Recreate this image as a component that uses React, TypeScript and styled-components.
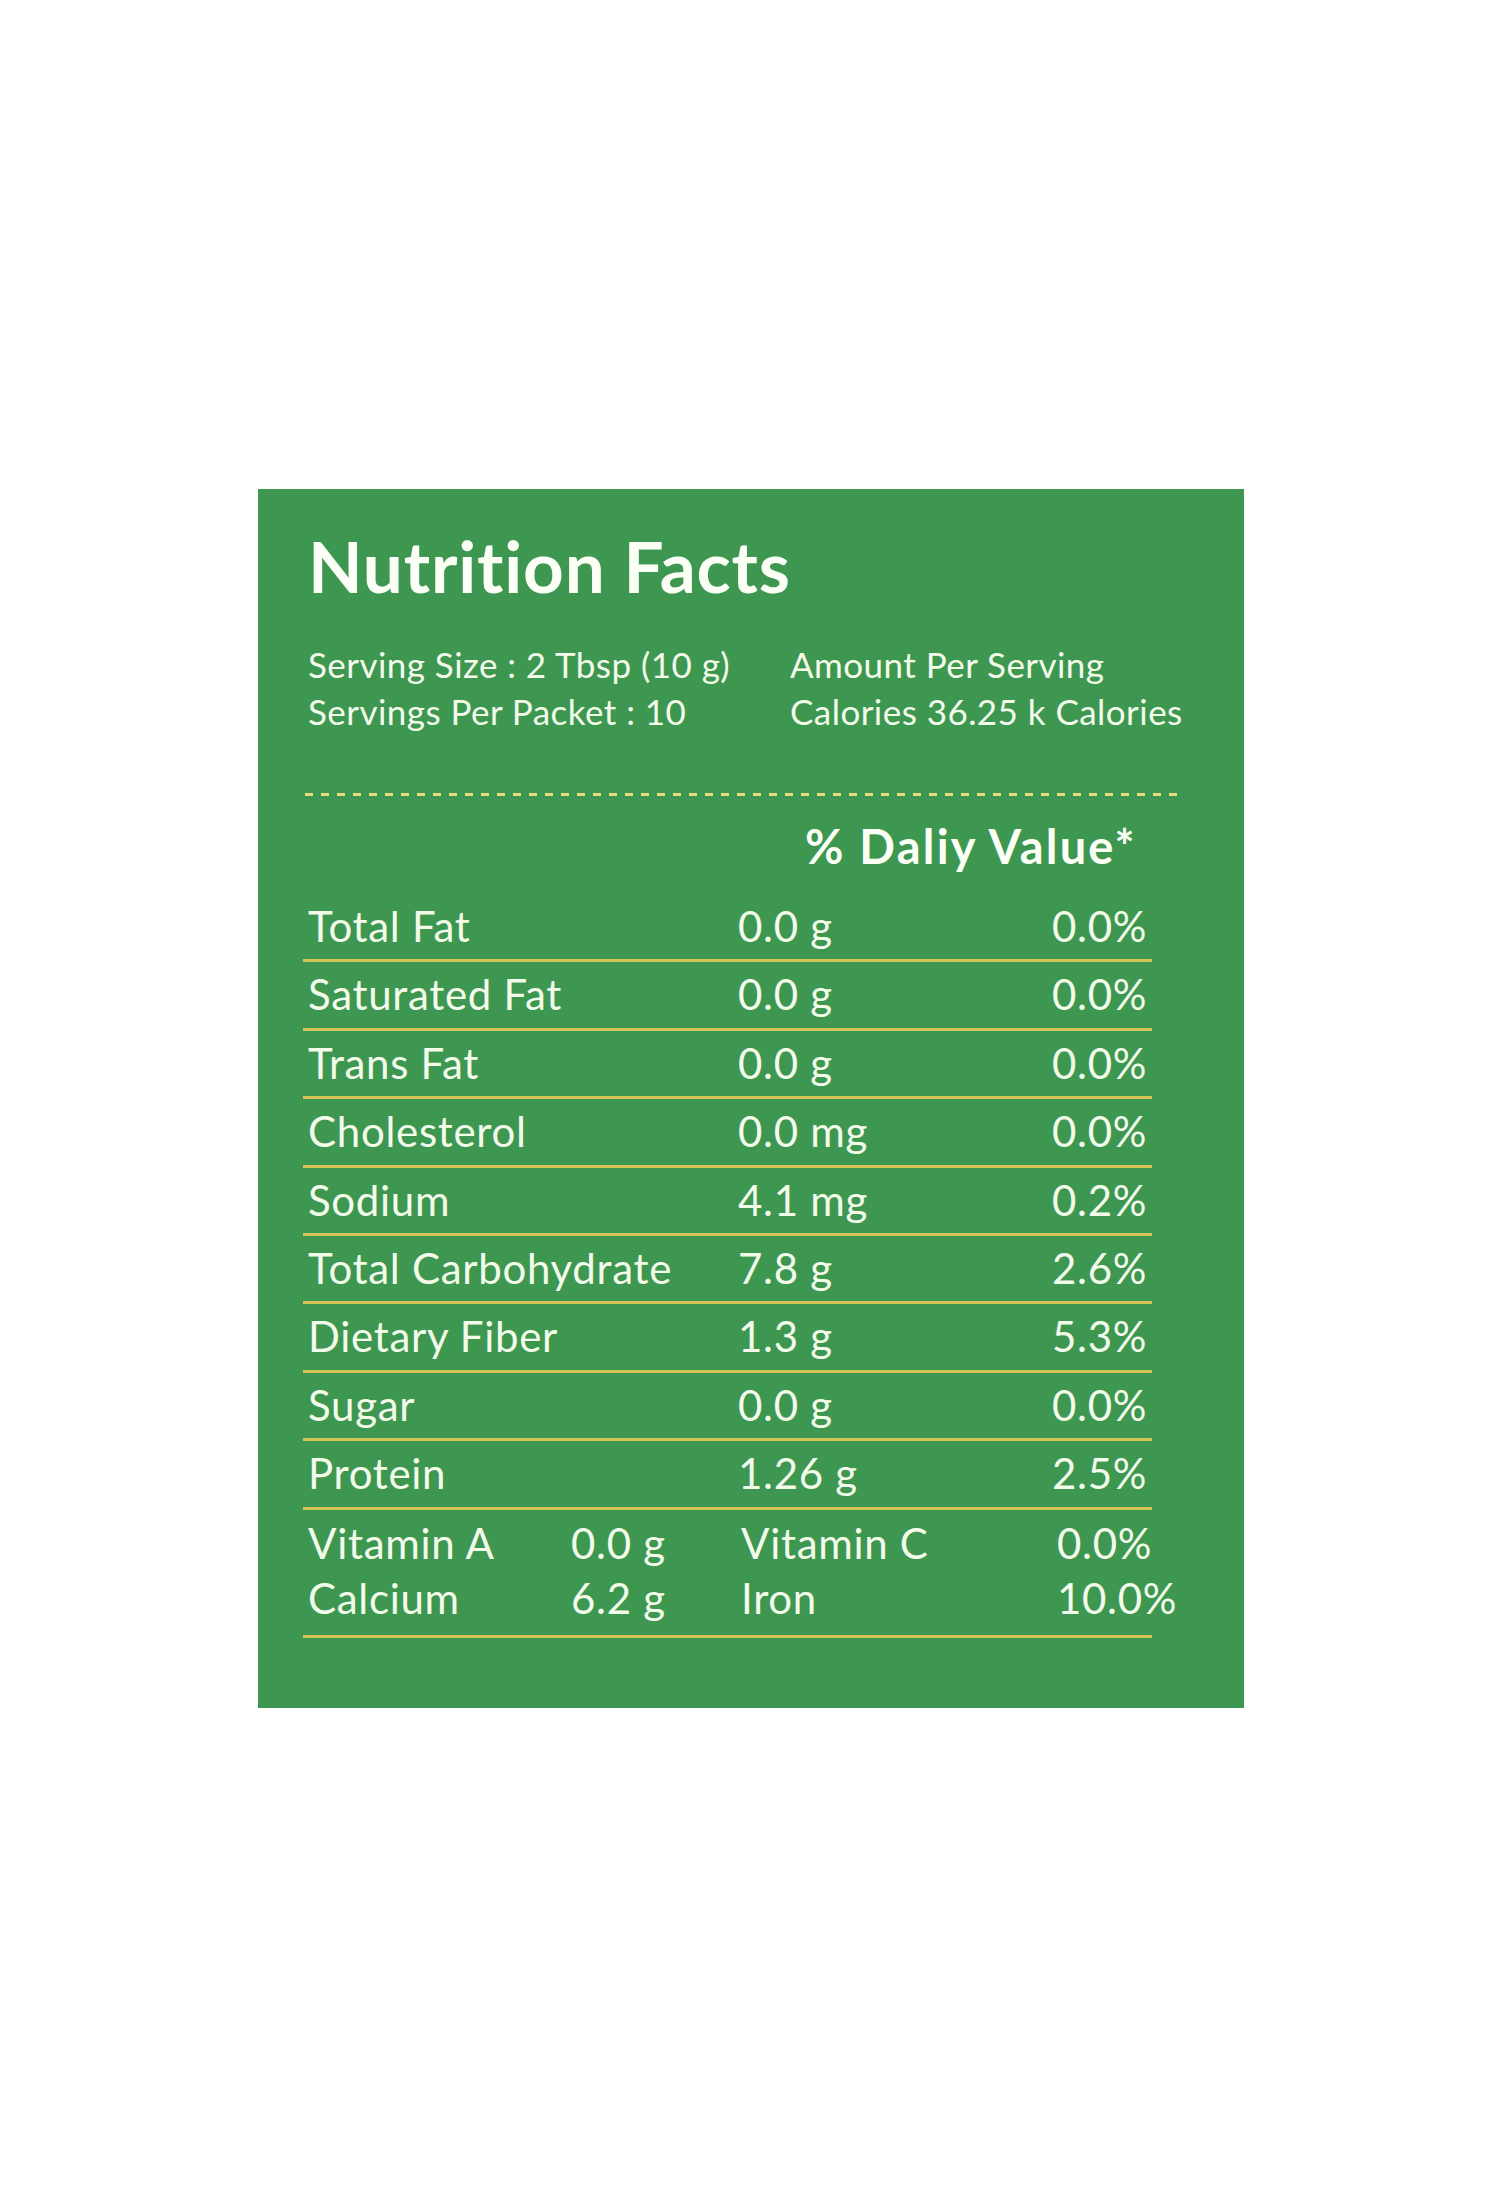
import React from 'react';
import styled, { createGlobalStyle } from 'styled-components';

const GlobalStyle = createGlobalStyle`
  html, body {
    margin: 0;
    padding: 0;
    background: #ffffff;
  }
  body {
    font-family: Lato, "Open Sans", sans-serif;
    font-variant-ligatures: none;
  }
`;

type Nutrient = { name: string; amount: string; daily: string };

const nutrients: Nutrient[] = [
  { name: 'Total Fat', amount: '0.0 g', daily: '0.0%' },
  { name: 'Saturated Fat', amount: '0.0 g', daily: '0.0%' },
  { name: 'Trans Fat', amount: '0.0 g', daily: '0.0%' },
  { name: 'Cholesterol', amount: '0.0 mg', daily: '0.0%' },
  { name: 'Sodium', amount: '4.1 mg', daily: '0.2%' },
  { name: 'Total Carbohydrate', amount: '7.8 g', daily: '2.6%' },
  { name: 'Dietary Fiber', amount: '1.3 g', daily: '5.3%' },
  { name: 'Sugar', amount: '0.0 g', daily: '0.0%' },
  { name: 'Protein', amount: '1.26 g', daily: '2.5%' },
];

const vitamins = [
  ['Vitamin A', '0.0 g', 'Vitamin C', '0.0%'],
  ['Calcium', '6.2 g', 'Iron', '10.0%'],
];

const App: React.FC = () => {
  return (
    <>
      <GlobalStyle />
      <Page>
        <Label>
          <Title>Nutrition Facts</Title>
          <Serving>
            <span>Serving Size : 2 Tbsp (10 g)</span>
            <span>Amount Per Serving</span>
            <span>Servings Per Packet : 10</span>
            <span>Calories 36.25 k Calories</span>
          </Serving>
          <DashedRule />
          <DailyHeader>% Daliy Value*</DailyHeader>
          <Table>
            {nutrients.map((item) => (
              <Row key={item.name}>
                <span>{item.name}</span>
                <span>{item.amount}</span>
                <span>{item.daily}</span>
              </Row>
            ))}
            <VitaminBlock>
              {vitamins.map((line) => (
                <VitaminLine key={line[0]}>
                  {line.map((cell) => (
                    <span key={cell}>{cell}</span>
                  ))}
                </VitaminLine>
              ))}
            </VitaminBlock>
          </Table>
        </Label>
      </Page>
    </>
  );
};

export default App;

const Page = styled.div`
  width: 1500px;
  min-height: 2200px;
  box-sizing: border-box;
  padding: 489px 0 0 258px;
`;

const Label = styled.section`
  width: 986px;
  height: 1219px;
  box-sizing: border-box;
  background-color: #3e9751;
  padding: 41px 0 0 50px;
  color: #f3fbea;
`;

const Title = styled.h1`
  margin: 0;
  font-size: 71px;
  line-height: 71px;
  font-weight: 700;
  color: #fbfff6;
  letter-spacing: 0.8px;
`;

const Serving = styled.div`
  margin-top: 40px;
  display: grid;
  grid-template-columns: 482px auto;
  font-size: 35px;
  line-height: 47px;
  letter-spacing: 0.45px;
  white-space: nowrap;
`;

const DashedRule = styled.div`
  margin: 58px 0 0 -3px;
  width: 872px;
  height: 3px;
  background-image: repeating-linear-gradient(
    to right,
    #e2df7c 0,
    #e2df7c 8px,
    transparent 8px,
    transparent 16px
  );
`;

const DailyHeader = styled.h2`
  margin: 27px 0 0 497px;
  font-size: 47px;
  line-height: 46px;
  font-weight: 700;
  color: #fbfff6;
  letter-spacing: 2.2px;
  white-space: nowrap;
`;

const Table = styled.div`
  margin: 25px 0 0 -5px;
  width: 849px;
`;

const Row = styled.div`
  display: grid;
  grid-template-columns: 430px 314px 1fr;
  box-sizing: border-box;
  height: 68.4px;
  padding-left: 5px;
  border-bottom: 3px solid #d3c656;
  font-size: 42px;
  line-height: 65.4px;
  letter-spacing: 0.7px;
  white-space: nowrap;
`;

const VitaminBlock = styled.div`
  margin-top: 6px;
  padding: 0 0 9px 5px;
  border-bottom: 3px solid #d3c656;
`;

const VitaminLine = styled.div`
  display: grid;
  grid-template-columns: 263px 170px 316px auto;
  font-size: 42px;
  line-height: 55px;
  letter-spacing: 0.7px;
  white-space: nowrap;
`;
